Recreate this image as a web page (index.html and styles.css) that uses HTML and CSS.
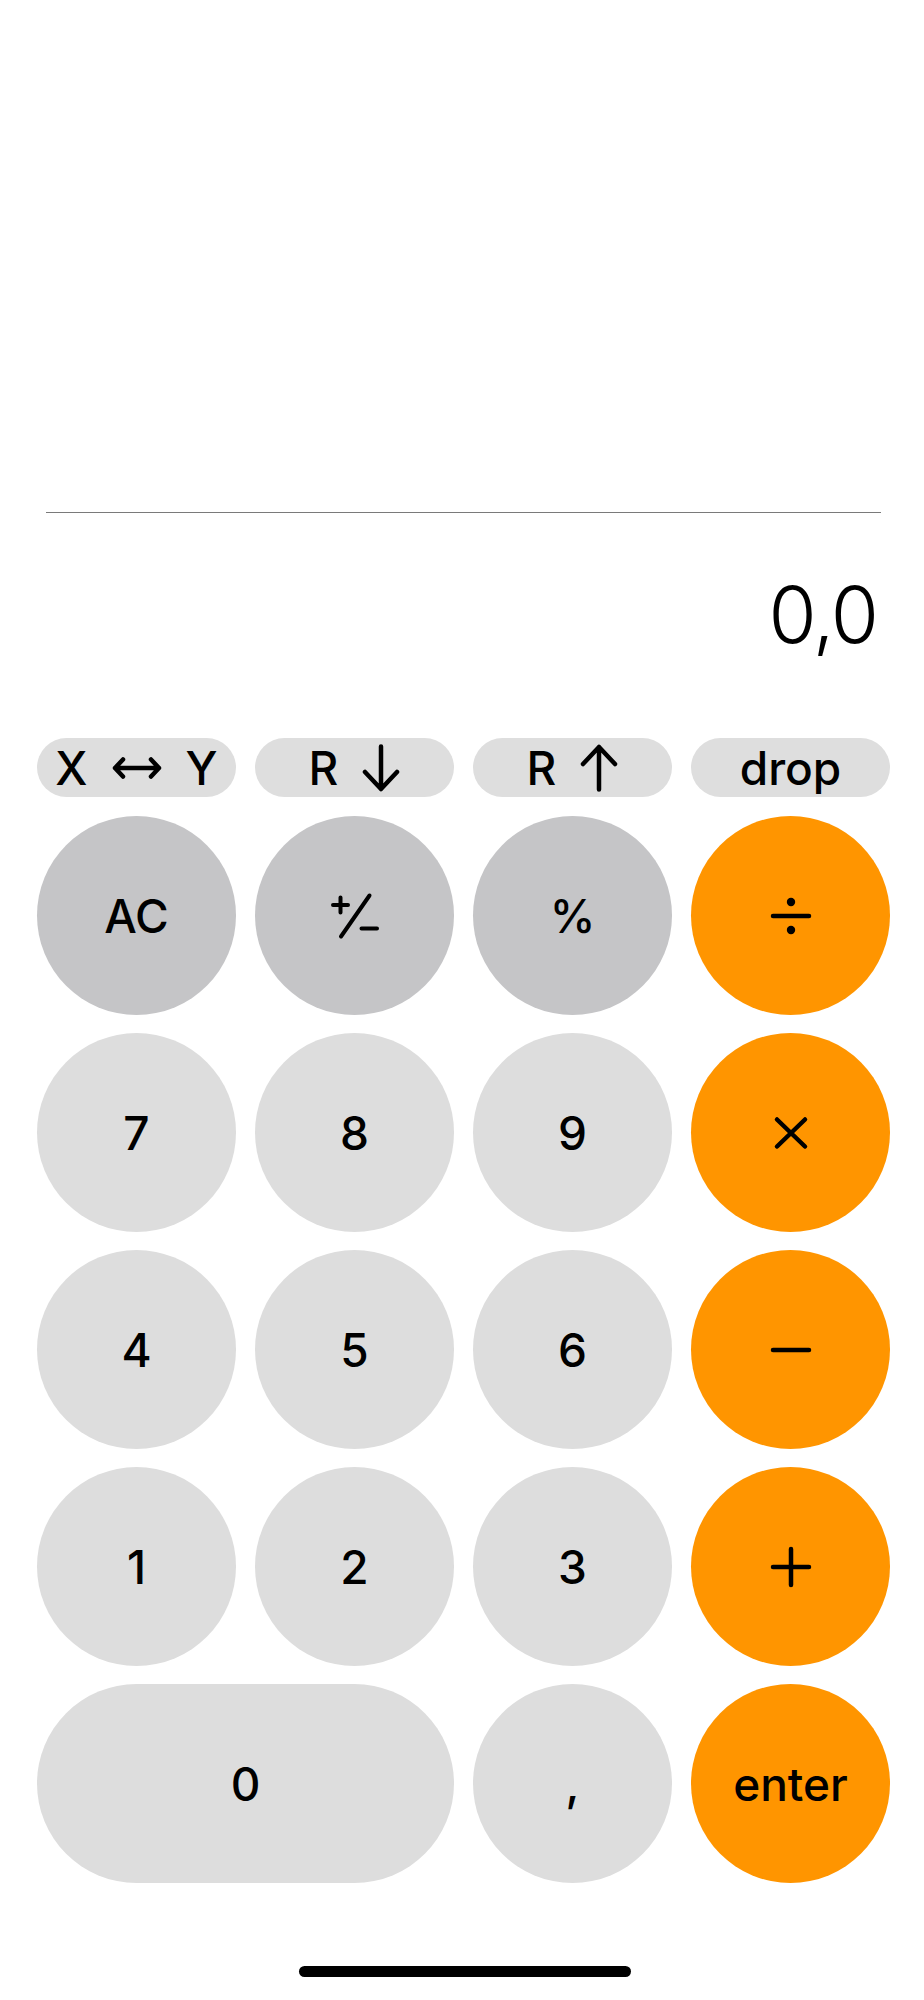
FILE: index.html
```html
<!DOCTYPE html>
<html lang="en">
<head>
    <meta charset="UTF-8">
    <meta name="viewport" content="width=device-width, initial-scale=1.0">
    <title>RPN Calculator</title>
    <link rel="stylesheet" href="styles.css">
</head>
<body>
    <div class="calculator">
        <div class="history"></div>

        <div class="display">0,0</div>

        <div class="stack-keys">
            <button class="stack-key">
                <span>X</span>
                <svg class="arrow-lr" viewBox="0 0 50 22">
                    <path d="M3 11 H47 M11 2.5 L3 11 L11 19.5 M39 2.5 L47 11 L39 19.5" />
                </svg>
                <span>Y</span>
            </button>
            <button class="stack-key">
                <span>R</span>
                <svg class="arrow-v" viewBox="0 0 38 48">
                    <path d="M19 2.5 V45 M3 28 L19 45 L35 28" />
                </svg>
            </button>
            <button class="stack-key">
                <span>R</span>
                <svg class="arrow-v" viewBox="0 0 38 48">
                    <path d="M19 45.5 V3 M3 20 L19 3 L35 20" />
                </svg>
            </button>
            <button class="stack-key">drop</button>
        </div>

        <div class="keypad">
            <button class="key fn">AC</button>
            <button class="key fn">
                <svg class="glyph" viewBox="-25 -25 50 50">
                    <path d="M-22 -11 H-7 M-14.5 -18.5 V-3.5 M14.5 -20.5 L-14 20.5 M6.5 12.5 H22" />
                </svg>
            </button>
            <button class="key fn">%</button>
            <button class="key op">
                <svg class="glyph" viewBox="-25 -25 50 50">
                    <path d="M-18 0 H18" />
                    <circle cx="0" cy="-14" r="4.2" />
                    <circle cx="0" cy="14" r="4.2" />
                </svg>
            </button>

            <button class="key">7</button>
            <button class="key">8</button>
            <button class="key">9</button>
            <button class="key op">
                <svg class="glyph" viewBox="-25 -25 50 50">
                    <path d="M-14 -13.5 L14 13.5 M14 -13.5 L-14 13.5" />
                </svg>
            </button>

            <button class="key">4</button>
            <button class="key">5</button>
            <button class="key">6</button>
            <button class="key op">
                <svg class="glyph" viewBox="-25 -25 50 50">
                    <path d="M-18 0 H18" />
                </svg>
            </button>

            <button class="key">1</button>
            <button class="key">2</button>
            <button class="key">3</button>
            <button class="key op">
                <svg class="glyph" viewBox="-25 -25 50 50">
                    <path d="M-18 0 H18 M0 -18 V18" />
                </svg>
            </button>

            <button class="key zero">0</button>
            <button class="key">,</button>
            <button class="key op">enter</button>
        </div>

        <div class="home-indicator"></div>
    </div>
</body>
</html>
```

FILE: styles.css
```css
body {
    margin: 0;
    background-color: #ffffff;
    font-family: Inter, "Noto Sans", sans-serif;
    color: #000000;
}

.calculator {
    width: 924px;
}

.history {
    height: 512px;
    margin: 0 43px 0 46px;
    border-bottom: 1px solid #7a7a7a;
}

.display {
    height: 76px;
    margin: 64px 47px 85px 0;
    font-size: 78px;
    font-weight: 300;
    line-height: 76px;
    text-align: right;
    letter-spacing: -2px;
}

button {
    border: none;
    padding: 0;
    margin: 0;
    font-family: inherit;
    color: #000000;
    cursor: pointer;
}

.stack-keys {
    display: grid;
    grid-template-columns: repeat(4, 199px);
    column-gap: 19px;
    margin-left: 37px;
}

.stack-key {
    height: 59px;
    border-radius: 30px;
    background-color: #dedede;
    font-size: 46px;
    font-weight: 500;
    line-height: 1;
    display: flex;
    justify-content: center;
    align-items: center;
    gap: 24px;
}

.arrow-lr {
    width: 50px;
    height: 22px;
}

.arrow-v {
    width: 38px;
    height: 48px;
}

.stack-key svg path {
    fill: none;
    stroke: #000000;
    stroke-width: 4.5;
    stroke-linecap: round;
    stroke-linejoin: round;
}

.keypad {
    display: grid;
    grid-template-columns: repeat(4, 199px);
    grid-auto-rows: 199px;
    column-gap: 19px;
    row-gap: 18px;
    margin: 19px 0 0 37px;
}

.key {
    border-radius: 50%;
    background-color: #dddddd;
    font-size: 46px;
    font-weight: 500;
    line-height: 1;
    display: flex;
    justify-content: center;
    align-items: center;
}

.key.fn {
    background-color: #c5c5c7;
}

.key.op {
    background-color: #ff9500;
}

.key.zero {
    grid-column: span 2;
    border-radius: 100px;
}

.glyph {
    width: 50px;
    height: 50px;
}

.glyph path {
    fill: none;
    stroke: #000000;
    stroke-width: 4.5;
    stroke-linecap: round;
}

.glyph circle {
    fill: #000000;
}

.key.fn .glyph path {
    stroke-width: 4;
}

.home-indicator {
    width: 332px;
    height: 11px;
    margin: 83px 0 0 299px;
    border-radius: 6px;
    background-color: #000000;
}
```
